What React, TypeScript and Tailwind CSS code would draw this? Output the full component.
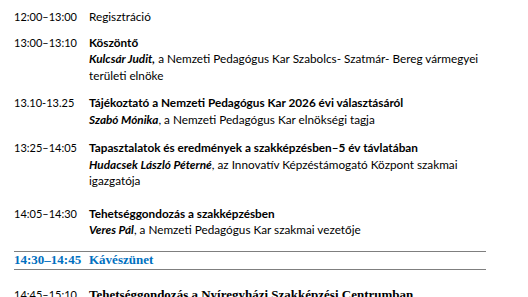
const sans = "font-['Lato','Liberation_Sans',sans-serif]";
const serif = "font-['Liberation_Serif','Times_New_Roman',serif]";

type Item = {
  time: string;
  title: string;
  bold?: boolean;
  name?: string;
  rest?: string;
  gap: string;
};

const items: Item[] = [
  { time: "12:00–13:00", title: "Regisztráció", gap: "mt-[9px]" },
  {
    time: "13:00–13:10",
    title: "Köszöntő",
    bold: true,
    name: "Kulcsár Judit,",
    rest: " a Nemzeti Pedagógus Kar Szabolcs- Szatmár- Bereg vármegyei területi elnöke",
    gap: "mt-[9px]",
  },
  {
    time: "13.10-13.25",
    title: "Tájékoztató a Nemzeti Pedagógus Kar 2026 évi választásáról",
    bold: true,
    name: "Szabó Mónika",
    rest: ", a Nemzeti Pedagógus Kar elnökségi tagja",
    gap: "mt-[11px]",
  },
  {
    time: "13:25–14:05",
    title: "Tapasztalatok és eredmények a szakképzésben–5 év távlatában",
    bold: true,
    name: "Hudacsek László Péterné",
    rest: ", az Innovatív Képzéstámogató Központ szakmai igazgatója",
    gap: "mt-[12px]",
  },
  {
    time: "14:05–14:30",
    title: "Tehetséggondozás a szakképzésben",
    bold: true,
    name: "Veres Pál",
    rest: ", a Nemzeti Pedagógus Kar szakmai vezetője",
    gap: "mt-[16px]",
  },
];

export default function App() {
  return (
    <div className={`w-[528px] h-[297px] overflow-hidden bg-white text-black ${sans}`}>
      <div className="w-[486px] pl-[14px]">
        {items.map((it) => (
          <div key={it.time} className={`flex text-[11.75px] leading-[16.5px] ${it.gap}`}>
            <div className="w-[75px] shrink-0 text-[11px]">{it.time}</div>
            <div className="flex-1">
              <div className={it.bold ? "font-bold" : ""}>{it.title}</div>
              {it.name && (
                <div>
                  <span className="font-bold italic">{it.name}</span>
                  {it.rest}
                </div>
              )}
            </div>
          </div>
        ))}

        <div className={`mt-[12px] flex items-center h-[19px] border-y border-[#7f7f7f] text-[#0070c0] font-bold text-[13px] ${serif}`}>
          <div className="w-[75px] shrink-0">14:30–14:45</div>
          <div>Kávészünet</div>
        </div>

        <div className="mt-[17px] flex items-center text-[11px] leading-[16.5px]">
          <div className="w-[75px] shrink-0">14:45–15:10</div>
          <div className={`font-bold text-[13px] ${serif}`}>
            Tehetséggondozás a Nyíregyházi Szakképzési Centrumban
          </div>
        </div>
      </div>
    </div>
  );
}
